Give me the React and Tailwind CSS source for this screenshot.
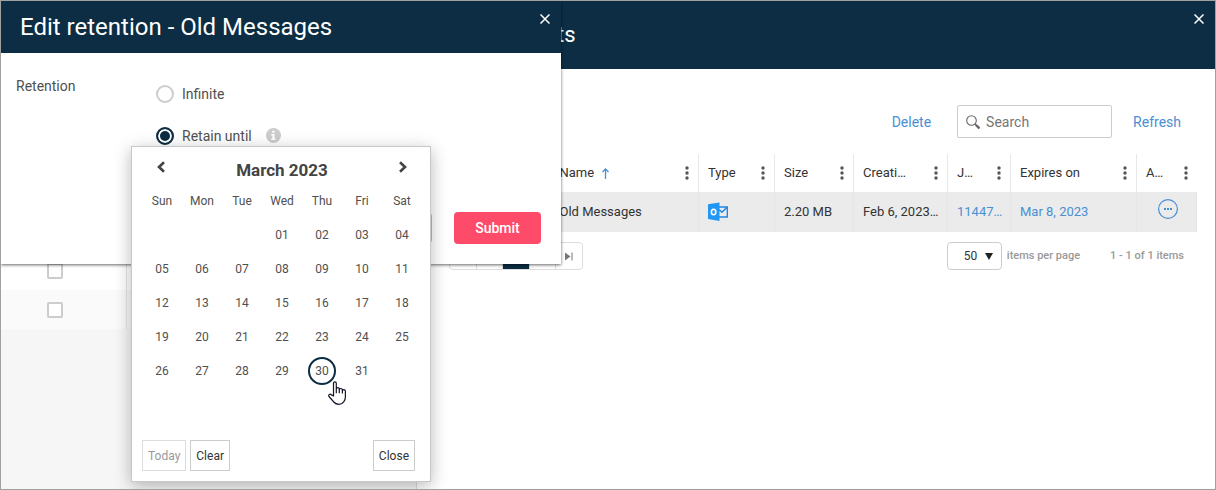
import { useState } from "react";

const weekDays = ["Sun", "Mon", "Tue", "Wed", "Thu", "Fri", "Sat"];

const weeks = [
  ["", "", "", "01", "02", "03", "04"],
  ["05", "06", "07", "08", "09", "10", "11"],
  ["12", "13", "14", "15", "16", "17", "18"],
  ["19", "20", "21", "22", "23", "24", "25"],
  ["26", "27", "28", "29", "30", "31", ""],
];

const columns = [
  { title: "", width: "w-[101px]" },
  { title: "Name", sorted: true },
  { title: "Type", width: "w-[76px]" },
  { title: "Size", width: "w-[79px]" },
  { title: "Creati…", width: "w-[94px]" },
  { title: "J…", width: "w-[63px]" },
  { title: "Expires on", width: "w-[126px]" },
  { title: "A…", width: "w-[60px]" },
];

function CloseButton() {
  return (
    <button aria-label="Close" className="absolute top-3 right-2.5 p-px">
      <svg width="10" height="10" viewBox="0 0 10 10" stroke="#fff" strokeWidth="1.5">
        <path d="M0.5 0.5l9 9M9.5 0.5l-9 9" />
      </svg>
    </button>
  );
}

function Dots() {
  return (
    <svg width="4" height="14" viewBox="0 0 4 14" fill="#555" className="shrink-0">
      <circle cx="2" cy="2" r="1.7" />
      <circle cx="2" cy="7" r="1.7" />
      <circle cx="2" cy="12" r="1.7" />
    </svg>
  );
}

function OutlookIcon() {
  return (
    <svg width="20" height="20" viewBox="0 0 20 20" fill="none">
      <path d="M11 5h8.300v10H11" stroke="#1f87e0" strokeWidth="1.4" />
      <path d="M11 7.500l3 2.700L19 5.300" stroke="#1f87e0" strokeWidth="1.5" />
      <path d="M0 2.2L11.5 0.5v18.5L0 17z" fill="#2196f3" />
      <ellipse cx="5.600" cy="10" rx="2.200" ry="2.800" stroke="#fff" strokeWidth="1.6" />
    </svg>
  );
}

function HandCursor() {
  return (
    <svg
      width="19"
      height="25"
      viewBox="0 0 19 25"
      fill="#fff"
      stroke="#14142a"
      strokeWidth="1.2"
      strokeLinejoin="round"
      className="pointer-events-none absolute top-6 left-5 z-10"
    >
      <path d="M5.5 15V2.5q0-1.7 1.4-1.7t1.4 1.7V8q0-1.3 1.5-1.3T11.300 8v.7q0-1.200 1.500-1.200t1.600 1.400v.8q0-1 1.300-1 1.700 0 1.700 1.700v5.600q0 3-1.700 4.800-1.800 2.500-4.700 2.500-3.300 0-5.200-2.300L1 15.500q-.7-1.300.3-2 1.100-.7 2.200.4z" />
      <path d="M8.300 8v4.300M11.300 8.500v3.800M14.400 9.500v3" fill="none" />
    </svg>
  );
}

function Calendar() {
  return (
    <div className="absolute top-[70px] left-[-25px] z-20 w-[300px] border border-[#c8c8c8] bg-white pr-2 pb-2.5 pl-2.5 text-xs text-[#505050] shadow-[0_4px_16px_rgba(0,0,0,0.28)]">
      <div className="flex h-[37px] items-start justify-between px-3.5 pt-3">
        <button aria-label="Previous month" className="pt-0.5">
          <svg width="10" height="12" viewBox="0 0 10 12" fill="none" stroke="#444" strokeWidth="2.6">
            <path d="M8 1.200L3 6l5 4.800" />
          </svg>
        </button>
        <h2 className="text-[17px] leading-[22px] font-bold text-[#444]">March 2023</h2>
        <button aria-label="Next month" className="pt-0.5">
          <svg width="10" height="12" viewBox="0 0 10 12" fill="none" stroke="#444" strokeWidth="2.6">
            <path d="M2 1.200L7 6l-5 4.800" />
          </svg>
        </button>
      </div>
      <table className="w-full table-fixed text-center">
        <thead>
          <tr className="h-[34px]">
            {weekDays.map((day) => (
              <th key={day} className="p-0 font-normal">{day}</th>
            ))}
          </tr>
        </thead>
        <tbody>
          {weeks.map((week) => (
            <tr key={week.join()} className="h-[34px]">
              {week.map((day, i) => (
                <td key={i} className="p-0">
                  {day && (
                    <div className="relative mx-auto size-7">
                      <button
                        className={
                          day === "30"
                            ? "size-7 rounded-full border-2 border-[#0c2d43]"
                            : "size-7"
                        }
                      >
                        {day}
                      </button>
                      {day === "30" && <HandCursor />}
                    </div>
                  )}
                </td>
              ))}
            </tr>
          ))}
        </tbody>
      </table>
      <div className="mt-[52px] flex gap-1 pr-[7px]">
        <button disabled className="h-[31px] border border-[#ddd] px-[5px] text-[#999]">Today</button>
        <button className="h-[31px] border border-[#ccc] px-[5px] text-[#333]">Clear</button>
        <button className="ml-auto h-[31px] border border-[#ccc] px-[5px] text-[#333]">Close</button>
      </div>
    </div>
  );
}

function RetentionDialog() {
  const [mode, setMode] = useState("until");
  const radio =
    "size-[18px] appearance-none rounded-full border-2 border-[#ccc] bg-white checked:border-[#0c2d43] checked:bg-[#0c2d43] checked:shadow-[inset_0_0_0_2px_#fff]";

  return (
    <div
      role="dialog"
      aria-label="Edit retention"
      className="absolute top-0 left-0 z-10 w-[560px] bg-white text-sm text-[#505050] shadow-[0_1px_3px_rgba(0,0,0,0.6)]"
    >
      <header className="relative flex h-[52px] items-center bg-[#0c2d43] px-[19px]">
        <h1 className="text-2xl text-white">Edit retention - Old Messages</h1>
        <CloseButton />
      </header>
      <div className="flex px-[15px] pt-[23px]">
        <div className="w-[140px] leading-5">Retention</div>
        <div className="relative flex flex-col gap-[22px] pt-2">
          <label className="flex h-5 items-center gap-2">
            <input
              type="radio"
              name="retention"
              className={radio}
              checked={mode === "infinite"}
              onChange={() => setMode("infinite")}
            />
            Infinite
          </label>
          <div className="flex h-5 items-center gap-3.5">
            <label className="flex items-center gap-2">
              <input
                type="radio"
                name="retention"
                className={radio}
                checked={mode === "until"}
                onChange={() => setMode("until")}
              />
              Retain until
            </label>
            <svg width="15" height="15" viewBox="0 0 15 15" className="mb-0.5">
              <circle cx="7.500" cy="7.500" r="7.500" fill="#ccc" />
              <path d="M6.300 2.800h2.200v2H6.300zM5.300 6h3.200v4.600h1.200V12H5.300v-1.400h1.100V7.400H5.300z" fill="#fff" />
            </svg>
          </div>
          <Calendar />
        </div>
      </div>
      <div className="flex justify-end gap-[22px] px-5 pt-[66px] pb-5">
        <button aria-label="Cancel" className="h-8 w-[87px] rounded-sm border border-[#b4bdc8]"></button>
        <button className="h-8 w-[87px] rounded-sm bg-[#ff4b6a] font-medium text-white">Submit</button>
      </div>
    </div>
  );
}

function ArchiveList() {
  return (
    <aside className="w-[416px] shrink-0 border-r border-[#ddd] bg-[#f6f6f6] pt-[250px]">
      <div className="flex h-[39px] items-center bg-white">
        <div className="flex h-full w-[126px] items-center border-r border-[#e5e5e5] pl-[46px]">
          <input type="checkbox" aria-label="Select row" className="size-4 appearance-none rounded-xs border-2 border-[#ccc] bg-white" />
        </div>
      </div>
      <div className="flex h-[39px] items-center bg-[#fafafa]">
        <div className="flex h-full w-[126px] items-center border-r border-[#e5e5e5] pl-[46px]">
          <input type="checkbox" aria-label="Select row" className="size-4 appearance-none rounded-xs border-2 border-[#ccc] bg-white" />
        </div>
      </div>
    </aside>
  );
}

function Toolbar() {
  return (
    <div className="flex items-center justify-end pr-4 text-sm text-[#4a8fd4]">
      <button>Delete</button>
      <label className="mr-[21px] ml-[26px] flex h-[33px] w-[155px] items-center gap-1.5 rounded-xs border border-[#ccc] px-2">
        <svg width="14" height="14" viewBox="0 0 14 14" fill="none" stroke="#666" className="shrink-0">
          <circle cx="5.500" cy="5.500" r="4.800" strokeWidth="1.1" />
          <path d="M9 9l1.500 1.500" strokeWidth="1.2" />
          <path d="M10 10l3.500 3.500" strokeWidth="2.4" />
        </svg>
        <input
          type="text"
          aria-label="Search"
          placeholder="Search"
          className="w-full min-w-0 outline-none placeholder:text-[#757575]"
        />
      </label>
      <button>Refresh</button>
    </div>
  );
}

function JobsTable() {
  return (
    <table className="mt-4 w-full table-fixed text-left text-[13px] text-[#333]">
      <thead>
        <tr className="h-[38px]">
          {columns.map((col, i) => (
            <th
              key={i}
              className={`${col.width || ""} border-r border-[#e8e8e8] p-0 font-normal last:border-r-0`}
            >
              {col.title && (
                <div className="flex items-center px-[9px]">
                  {col.title}
                  {col.sorted && (
                    <svg width="7" height="11" viewBox="0 0 7 11" fill="none" stroke="#4a8fd4" strokeWidth="1.3" className="ml-2">
                      <path d="M3.500 11V1M0.500 4l3-3 3 3" />
                    </svg>
                  )}
                  <button aria-label="Column menu" className="ml-auto">
                    <Dots />
                  </button>
                </div>
              )}
            </th>
          ))}
        </tr>
      </thead>
      <tbody>
        <tr className="h-10 bg-[#ebebeb] *:border-r *:border-[#e6e6e6] *:py-0 *:pr-0 *:pl-[9px]">
          <td></td>
          <td>Old Messages</td>
          <td><OutlookIcon /></td>
          <td>2.20 MB</td>
          <td className="whitespace-nowrap">Feb 6, 2023…</td>
          <td><a href="#job" className="text-[#4a8fd4]">11447…</a></td>
          <td><a href="#expires" className="text-[#4a8fd4]">Mar 8, 2023</a></td>
          <td>
            <button aria-label="Actions" className="mb-1.5 ml-3 block">
              <svg width="20" height="20" viewBox="0 0 20 20">
                <circle cx="10" cy="10" r="9.400" fill="none" stroke="#4a8fd4" strokeWidth="1.2" />
                <path d="M6 9h2v2H6zM9 9h2v2H9zM12 9h2v2h-2z" fill="#4a8fd4" />
              </svg>
            </button>
          </td>
        </tr>
      </tbody>
    </table>
  );
}

function Pager() {
  return (
    <div className="mt-2.5 flex items-center text-[11px] text-[#999]">
      <div className="flex h-7 w-[134px] rounded-sm border border-[#ddd] *:h-full *:flex-1 *:border-r *:border-[#ddd]">
        <button aria-label="First page"></button>
        <button aria-label="Previous page"></button>
        <button aria-label="Current page" className="bg-[#0c2d43]"></button>
        <button aria-label="Next page"></button>
        <button aria-label="Last page" className="flex items-center justify-center border-r-0!">
          <svg width="8" height="9" viewBox="0 0 8 9" fill="#777">
            <path d="M0 0.500l5.500 4-5.500 4zM6.500 0.500h1v8h-1z" />
          </svg>
        </button>
      </div>
      <div className="ml-auto flex items-center gap-[5px]">
        <div className="relative">
          <select
            id="page-size"
            className="h-7 w-[55px] appearance-none rounded-sm border border-[#ccc] bg-white pl-4 text-xs text-[#333]"
          >
            <option>50</option>
          </select>
          <svg width="8" height="7" viewBox="0 0 8 7" className="pointer-events-none absolute top-[11px] right-[9px]">
            <path d="M0 0h8L4 7z" fill="#222" />
          </svg>
        </div>
        <label htmlFor="page-size" className="font-medium">items per page</label>
      </div>
      <span className="mr-[13px] ml-[30px] font-medium">1 - 1 of 1 items</span>
    </div>
  );
}

function App() {
  return (
    <div className="relative flex min-h-screen overflow-hidden border border-[#a0a0a0] bg-white font-['Roboto',sans-serif]">
      <ArchiveList />
      <section className="min-w-0 flex-1">
        <header className="relative flex h-[68px] items-center bg-[#0c2d43] pl-[140px]">
          <h1 className="text-[22px] leading-8 text-white">ts</h1>
          <CloseButton />
        </header>
        <main className="pt-9 pr-[18px] pl-8">
          <Toolbar />
          <JobsTable />
          <Pager />
        </main>
      </section>
      <RetentionDialog />
    </div>
  );
}

export default App;
